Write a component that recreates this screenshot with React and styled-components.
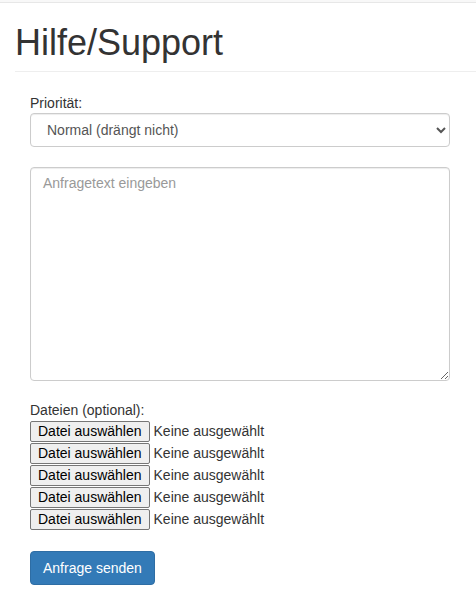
import React from "react";
import styled, { createGlobalStyle } from "styled-components";

const Global = createGlobalStyle`
  html, body { margin: 0; padding: 0; background: #fff; }
  body {
    font-family: "Liberation Sans", Arial, Helvetica, sans-serif;
    font-size: 14px;
    line-height: 1.42857;
    color: #333;
  }
  * { box-sizing: border-box; }
`;

const TopBar = styled.div`
  height: 3px;
  background: #f8f8f8;
  border-bottom: 1px solid #e7e7e7;
`;

const PageHeader = styled.div`
  margin-left: 15px;
  padding: 20px 0 9px;
  border-bottom: 1px solid #eee;
`;

const Title = styled.h1`
  margin: 0;
  font-family: "Liberation Sans", Arial, sans-serif;
  font-size: 36px;
  font-weight: 500;
  line-height: 39px;
  color: #333;
`;

const Form = styled.form`
  display: flex;
  flex-direction: column;
  padding: 0 26px 0 30px;
  margin-top: 21px;
`;

const Label = styled.label`
  display: block;
  line-height: 20px;
  font-weight: normal;
  color: #333;
  margin-top: ${(p) => p.$top || 0}px;
`;

const Select = styled.select`
  display: block;
  width: 100%;
  height: 34px;
  padding: 6px 12px;
  font-family: "Liberation Sans", Arial, sans-serif;
  font-size: 14px;
  color: #555;
  background: #fff;
  border: 1px solid #ccc;
  border-radius: 4px;
  box-shadow: inset 0 1px 1px rgba(0, 0, 0, 0.075);
`;

const TextArea = styled.textarea`
  display: block;
  width: 100%;
  height: 214px;
  margin-top: 20px;
  padding: 6px 12px;
  font-family: "Liberation Sans", Arial, sans-serif;
  font-size: 14px;
  line-height: 1.42857;
  color: #555;
  background: #fff;
  border: 1px solid #ccc;
  border-radius: 4px;
  box-shadow: inset 0 1px 1px rgba(0, 0, 0, 0.075);
  resize: vertical;
  &::placeholder { color: #999; }
`;

const FileList = styled.div`
  display: flex;
  flex-direction: column;
  margin-top: 1px;
`;

const FileRow = styled.div`
  display: flex;
  align-items: flex-start;
  height: 22px;
`;

const FileButton = styled.button`
  height: 21px;
  padding: 0 7px;
  margin-right: 4px;
  font-family: "Liberation Sans", Arial, sans-serif;
  font-size: 14px;
  line-height: 19px;
  color: #000;
  background: #efefef;
  border: 1px solid #767676;
  border-radius: 2px;
`;

const FileStatus = styled.span`
  line-height: 21px;
  color: #333;
`;

const Submit = styled.button`
  align-self: flex-start;
  margin-top: 20px;
  height: 34px;
  padding: 6px 12px;
  font-family: "Liberation Sans", Arial, sans-serif;
  font-size: 14px;
  line-height: 20px;
  color: #fff;
  background: #337ab7;
  border: 1px solid #2e6da4;
  border-radius: 4px;
`;

export default function App() {
  const files = [0, 1, 2, 3, 4];
  return (
    <>
      <Global />
      <TopBar />
      <PageHeader>
        <Title>Hilfe/Support</Title>
      </PageHeader>
      <Form onSubmit={(e) => e.preventDefault()}>
        <Label htmlFor="prio">Priorität:</Label>
        <Select id="prio" defaultValue="normal">
          <option value="normal">Normal (drängt nicht)</option>
          <option value="hoch">Hoch</option>
          <option value="dringend">Dringend</option>
        </Select>
        <TextArea placeholder="Anfragetext eingeben" />
        <Label $top={19}>Dateien (optional):</Label>
        <FileList>
          {files.map((i) => (
            <FileRow key={i}>
              <FileButton type="button">Datei auswählen</FileButton>
              <FileStatus>Keine ausgewählt</FileStatus>
            </FileRow>
          ))}
        </FileList>
        <Submit type="submit">Anfrage senden</Submit>
      </Form>
    </>
  );
}
